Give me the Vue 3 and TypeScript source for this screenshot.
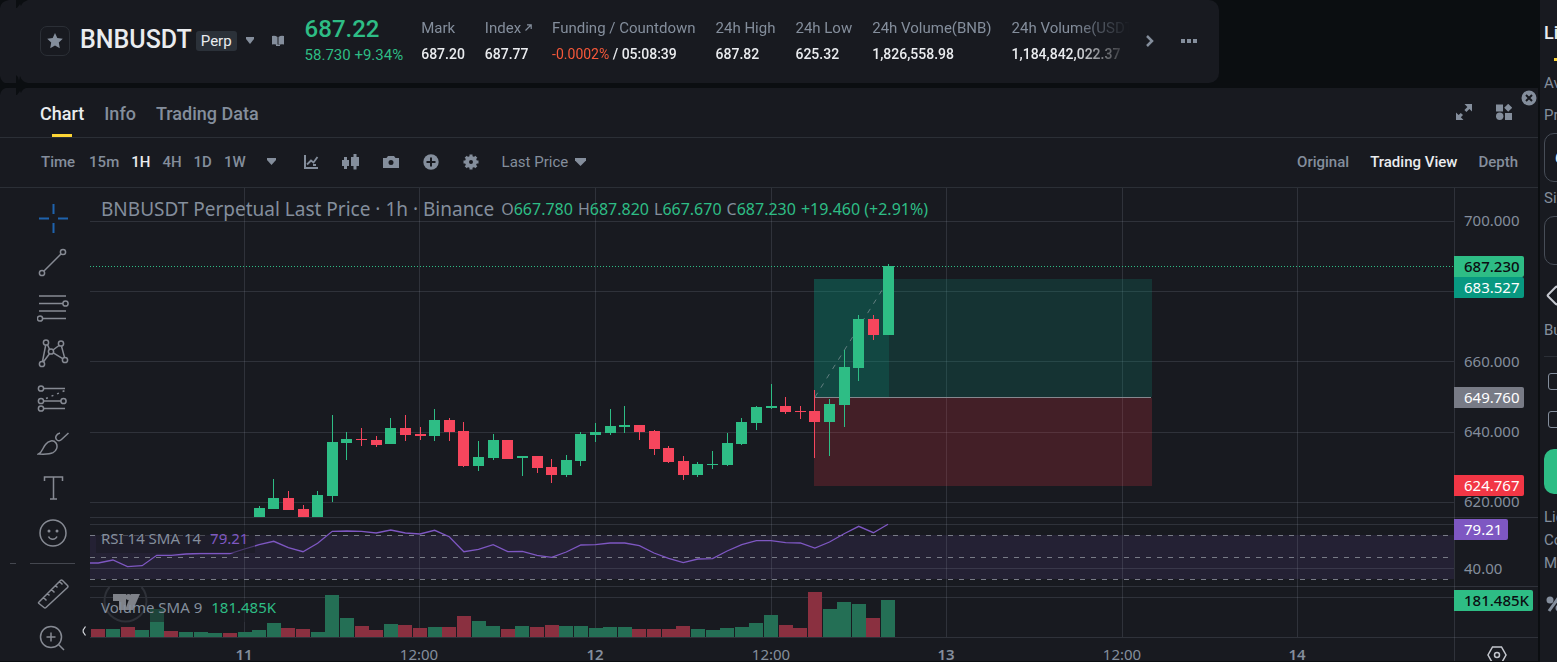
<script setup lang="ts">
import { ref } from 'vue'

type Tone = 'up' | 'down'
interface Stat { label: string; value: string; link?: boolean; rate?: string }
interface Tag { text: string; y: number; w: number; kind: string }

const stats: Stat[] = [
  { label: 'Mark', value: '687.20' },
  { label: 'Index', value: '687.77', link: true },
  { label: 'Funding / Countdown', value: ' / 05:08:39', rate: '-0.0002%' },
  { label: '24h High', value: '687.82' },
  { label: '24h Low', value: '625.32' },
  { label: '24h Volume(BNB)', value: '1,826,558.98' },
  { label: '24h Volume(USDT)', value: '1,184,842,022.37' },
]

const tabs = ['Chart', 'Info', 'Trading Data']
const activeTab = ref('Chart')
const intervals = ['15m', '1H', '4H', '1D', '1W']
const activeInterval = ref('1H')
const views = ['Original', 'Trading View', 'Depth']
const activeView = ref('Trading View')
const priceType = ref('Last Price')
const price = ref('687.2')
const size = ref('')
const leverage = ref(0)

const ohlc = [
  ['O', '667.780'],
  ['H', '687.820'],
  ['L', '667.670'],
  ['C', '687.230'],
]

/* Plot geometry: one bar per hour, day line of the 11th at x = 154. */
const DAY = 154
const STEP = 14.625
const FLOOR = 449
const barX = (i: number): number => DAY + 0.5 + STEP * i

/* bar index, tone, body top, body bottom, wick top, wick bottom */
const candles: [number, Tone, number, number, number, number][] = [
  [1, 'up', 320, 329, 318, 329], [2, 'up', 310, 321, 291, 321], [3, 'down', 310, 322, 303, 322],
  [4, 'down', 321, 329, 317, 329], [5, 'up', 307, 329, 303, 329], [6, 'up', 254, 308, 227, 314],
  [7, 'up', 251, 255, 244, 272], [8, 'down', 251, 252, 240, 258], [9, 'down', 252, 257, 248, 259],
  [10, 'up', 240, 256, 230, 256], [11, 'down', 240, 247, 227, 253], [12, 'down', 246, 248, 239, 252],
  [13, 'up', 232, 248, 221, 253], [14, 'down', 232, 244, 230, 253], [15, 'down', 243, 278, 234, 279],
  [16, 'up', 269, 278, 253, 283], [17, 'up', 252, 270, 246, 272], [18, 'down', 252, 271, 252, 271],
  [19, 'up', 268, 270, 268, 288], [20, 'down', 268, 280, 268, 285], [21, 'down', 279, 287, 271, 295],
  [22, 'up', 272, 287, 267, 289], [23, 'up', 246, 273, 244, 278], [24, 'up', 244, 247, 235, 254],
  [25, 'up', 238, 245, 221, 247], [26, 'up', 237, 239, 218, 245], [27, 'down', 237, 244, 237, 252],
  [28, 'down', 243, 261, 242, 267], [29, 'down', 260, 274, 258, 275], [30, 'down', 273, 287, 268, 292],
  [31, 'up', 276, 287, 274, 289], [32, 'up', 276, 277, 263, 281], [33, 'up', 255, 277, 245, 278],
  [34, 'up', 234, 256, 230, 257], [35, 'up', 219, 235, 218, 242], [36, 'up', 218, 220, 196, 221],
  [37, 'down', 218, 224, 209, 226], [38, 'down', 223, 224, 218, 231], [39, 'down', 223, 234, 202, 270],
  [40, 'up', 216, 234, 211, 268], [41, 'up', 179, 217, 162, 239], [42, 'up', 131, 180, 127, 193],
  [43, 'down', 131, 147, 127, 152], [44, 'up', 78, 147, 76, 147],
]

/* Volume bars from index -10: positive heights rise, negative heights are falling hours. */
const volumes = [
  -8, 8, -10, 7, 28, -6, 5, 5, 4, -4, 5, 7, 14, -9, -8, 5, 42, 19, -11, -7, 13, -12, -9, 10, -10,
  -21, 16, 11, -8, 11, -10, -12, 11, 11, 9, 10, 10, -8, -8, -8, -11, 8, 7, 9, 10, 14, 22, -12, -9,
  -45, 28, 35, 33, -19, 37,
]

const rsi = [
  375, 375, 372, 378.7, 377.7, 367.3, 367.3, 366, 365.5, 365.5, 365.5, 361, 356.7, 353.3, 359.7,
  363.7, 355.3, 343.3, 343, 343.3, 345, 342, 345, 346, 342.3, 348.7, 363.7, 361.3, 356.7, 363.7,
  363.3, 367.3, 369.3, 364, 357, 356.7, 355, 355, 357.7, 365, 370.3, 374.7, 371, 370.7, 363, 356.7,
  352.7, 352.7, 354.7, 355, 360, 354, 345.7, 338.3, 344.7, 336.3,
]
const rsiPoints = rsi.map((y, k) => `${k === 0 ? 0 : barX(k - 11)},${y}`).join(' ')

const gridX = [154, 329, 505, 681, 856, 1032, 1207]
const gridY = [33, 103, 173, 244, 314, 336, 380, 409]
const timeLabels = ['11', '12:00', '12', '12:00', '13', '12:00', '14']

const scale = [
  { text: '700.000', y: 33 }, { text: '660.000', y: 174 }, { text: '640.000', y: 244 },
  { text: '620.000', y: 314 }, { text: '80.00', y: 336 }, { text: '40.00', y: 381 },
]
const tags: Tag[] = [
  { text: '687.230', y: 68, w: 70, kind: 'last' },
  { text: '683.527', y: 89, w: 70, kind: 'target' },
  { text: '649.760', y: 199, w: 70, kind: 'entry' },
  { text: '624.767', y: 287, w: 70, kind: 'stop' },
  { text: '79.21', y: 331, w: 54, kind: 'rsi' },
  { text: '181.485K', y: 402, w: 79, kind: 'last' },
]

const tools: { name: string; body: string }[] = [
  { name: 'Crosshair', body: '<g stroke="#1e63ad" stroke-width="2"><path d="M16.500 2v10M16.500 21v10M2 16.500h10M21 16.500h10"/></g>' },
  { name: 'Trend line', body: '<circle cx="5" cy="26" r="2.6"/><circle cx="26" cy="5" r="2.6"/><path d="M7 24 24 7"/>' },
  { name: 'Fibonacci', body: '<path d="M2 4h27M2 11.500h24M2 19h27M6 26.500h23"/><circle cx="28.500" cy="11.500" r="2.600"/><circle cx="3" cy="26.500" r="2.600"/>' },
  { name: 'Patterns', body: '<g transform="translate(0 1)"><circle cx="9" cy="4.500" r="2.600"/><circle cx="24" cy="5.500" r="2.600"/><circle cx="14" cy="13.500" r="2.600"/><circle cx="5" cy="26" r="2.600"/><circle cx="28" cy="22" r="2.600"/><path d="M8.700 7.200 5.500 23.500M10.500 6.800l2 4.500M22 7.500l-6 4.500M24.500 8.200l3 11.200M16.300 14.800l9.400 5.800M12.500 15.700 6.500 23.800"/></g>' },
  { name: 'Forecast', body: '<circle cx="4" cy="6.500" r="2.600"/><circle cx="4" cy="19" r="2.600"/><circle cx="26.500" cy="19" r="2.600"/><circle cx="4" cy="26.500" r="2.600"/><path d="M6.600 6.500H28M6.600 19H24M6.600 26.500H28"/><path d="M9 16.500 28 8.500" stroke-dasharray="2 4"/>' },
  { name: 'Brush', body: '<path d="M1.500 27c4-2 4-6 7-9.500 3-4 8-5 10.500-1.500 2.500 4 0 8-3 9.700-3 1.500-9 1.600-14.500 1.300zM23 6c-4 1-5.500 5-3 7 1.500 1 3 1 4.500-.5L31.500 6"/>' },
  { name: 'Text', body: '<path d="M7.500 9V5h18V9M16.500 5v22M13 27h7"/>' },
  { name: 'Emoji', body: '<circle cx="16" cy="16" r="13"/><path d="M11.500 19.500c1.500 3.500 7 3.500 8.500 0"/><g fill="#868a93" stroke="none"><circle cx="12" cy="14" r="1.500"/><circle cx="20" cy="14" r="1.500"/></g>' },
]
const lowerTools: { name: string; body: string }[] = [
  { name: 'Measure', body: '<path d="M2 25 23.500 3.500q1-1 2 0l5 5q1 1 0 2L9 30.500q-1 1-2 0L2 26.500q-1-.8 0-1.500zM6.500 20.500l3 3M10.500 16.500l2 2M14.500 12.500l3 3M18.500 8.500l2 2M22.500 4.500l3 3"/>' },
  { name: 'Zoom in', body: '<circle cx="14" cy="15" r="10.500"/><path d="M21.500 22.500l5.500 5.500M14 10.500v9M9.500 15h9"/>' },
]
</script>

<template>
  <div class="page">
    <main class="main">
      <header class="ticker">
        <button class="star" aria-label="Favourite">
          <svg width="16" height="16" viewBox="0 0 16 16"><path fill="currentColor" d="M8 0l2.300 5 5.500.7-4 3.900 1 5.600L8 12.500l-4.800 2.700 1-5.600-4-3.900L5.700 5z" /></svg>
        </button>
        <h1 class="symbol">BNBUSDT</h1>
        <span class="perp">Perp</span>
        <button class="plain pair" aria-label="Choose pair">
          <svg width="8" height="7" viewBox="0 0 8 7"><path fill="currentColor" d="M0 0h8v2L4 7 0 2z" /></svg>
        </button>
        <button class="plain guide" aria-label="Guide">
          <svg width="12" height="11" viewBox="0 0 12 11"><path fill="currentColor" d="M0 1q3-1 5.500 1v8Q3 9 0 9.500zM12 1Q9 0 6.500 2v8q2.500-1 5.500-.5zM4 9.500h4v1.500H4z" /></svg>
        </button>
        <div class="quote">
          <div class="last">687.22</div>
          <div class="change">58.730 +9.34%</div>
        </div>
        <dl class="stats">
          <div v-for="s in stats" :key="s.label" class="stat">
            <dt>{{ s.label }}<svg v-if="s.link" class="ext" width="7" height="7" viewBox="0 0 7 7"><path d="M.5 6.500 6 1M2 .8h4.200V5" fill="none" stroke="currentColor" stroke-width="1.200" /></svg></dt>
            <dd><span v-if="s.rate" class="rate">{{ s.rate }}</span>{{ s.value }}</dd>
          </div>
        </dl>
        <button class="plain next" aria-label="Scroll">
          <svg width="10" height="14" viewBox="0 0 10 14"><path d="M2 2l5 5-5 5" fill="none" stroke="currentColor" stroke-width="2.500" /></svg>
        </button>
        <button class="plain more" aria-label="More">
          <svg width="16" height="4" viewBox="0 0 16 4"><path fill="currentColor" d="M0 0h4v4H0zM6 0h4v4H6zM12 0h4v4h-4z" /></svg>
        </button>
      </header>

      <section class="panel">
        <nav class="tabs">
          <button v-for="t in tabs" :key="t" class="tab" :class="{ on: t === activeTab }" @click="activeTab = t">{{ t }}</button>
          <span class="grow"></span>
          <button class="plain expand" aria-label="Expand">
            <svg width="16" height="16" viewBox="0 0 16 16"><path fill="currentColor" d="M8.500 0H16v7.500l-2.600-2.600-3 3-2-2 3-3zM7.500 16H0V8.500l2.600 2.600 2.200-2.200 2.200 2.200-2.200 2.200z" /></svg>
          </button>
          <button class="plain widgets" aria-label="Widgets">
            <svg width="16" height="16" viewBox="0 0 16 16"><path fill="currentColor" d="M0 .5h7v7H0zM12.200-.2l4 4-4 4-4-4zM9 9h7v7H9z" /><circle cx="3.700" cy="12.300" r="3.700" fill="currentColor" /></svg>
          </button>
          <button class="plain close" aria-label="Close">
            <svg width="16" height="16" viewBox="0 0 16 16"><circle cx="8" cy="8" r="7.500" fill="currentColor" /><path d="M5 5l6 6M11 5l-6 6" stroke="#181a20" stroke-width="2" /></svg>
          </button>
        </nav>

        <div class="bar">
          <span class="time">Time</span>
          <button v-for="i in intervals" :key="i" class="pick" :class="{ on: i === activeInterval }" @click="activeInterval = i">{{ i }}</button>
          <button class="plain frames" aria-label="More intervals">
            <svg width="9" height="7" viewBox="0 0 9 7"><path fill="currentColor" d="M0 0h9v2L4.500 7 0 2z" /></svg>
          </button>
          <div class="icons">
            <button class="plain" aria-label="Indicators"><svg width="16" height="16" viewBox="0 0 16 16"><path d="M2 1v13h13" fill="none" stroke="currentColor" stroke-width="2" /><path d="M4 10.500l4-4 2.500 2L14.500 3M10 11h3" fill="none" stroke="currentColor" stroke-width="1.800" /></svg></button>
            <button class="plain" aria-label="Chart style"><svg width="18" height="16" viewBox="0 0 18 16"><path fill="currentColor" d="M0 6h2V3h3v3h2v6H5v3H2v-3H0zM9 3h2.500V0h3v3H17v9h-2.500v3.500h-3V12H9z" /></svg></button>
            <button class="plain" aria-label="Snapshot"><svg width="16" height="14" viewBox="0 0 16 14"><path fill="currentColor" fill-rule="evenodd" d="M0 3h3.500L5 1h6l1.500 2H16v10H0zm8 2a2.500 2.500 0 100 5 2.500 2.500 0 000-5z" /></svg></button>
            <button class="plain" aria-label="Add"><svg width="16" height="16" viewBox="0 0 16 16"><circle cx="8" cy="8" r="7.700" fill="currentColor" /><path d="M8 3.500v9M3.500 8h9" stroke="#181a20" stroke-width="2" /></svg></button>
            <button class="plain" aria-label="Settings"><svg width="16" height="16" viewBox="0 0 16 16"><circle cx="8" cy="8" r="4" fill="none" stroke="currentColor" stroke-width="4" /><path d="M8 .5v3M8 12.500v3M.5 8h3M12.500 8h3M2.700 2.700l2 2M11.300 11.300l2 2M13.300 2.700l-2 2M4.700 11.300l-2 2" stroke="currentColor" stroke-width="3" /></svg></button>
          </div>
          <label class="source">
            <select v-model="priceType" aria-label="Price source"><option>Last Price</option></select>
            <svg width="11" height="8" viewBox="0 0 11 8"><path fill="currentColor" d="M0 0h11v2.500L5.500 8 0 2.500z" /></svg>
          </label>
          <span class="grow"></span>
          <div class="views">
            <button v-for="v in views" :key="v" class="pick" :class="{ on: v === activeView }" @click="activeView = v">{{ v }}</button>
          </div>
        </div>

        <div class="board">
          <div class="tools">
            <button v-for="t in tools" :key="t.name" class="plain tool" :aria-label="t.name">
              <svg width="32" height="32" viewBox="0 0 32 32" v-html="t.body"></svg>
            </button>
            <div class="divider"></div>
            <button v-for="t in lowerTools" :key="t.name" class="plain tool" :aria-label="t.name">
              <svg width="32" height="32" viewBox="0 0 32 32" v-html="t.body"></svg>
            </button>
            <button class="plain fold" aria-label="Collapse">
              <svg width="4" height="10" viewBox="0 0 4 10"><path d="M3.500.5 1.200 4v2l2.300 3.500" fill="none" stroke="#d5d8dd" stroke-width="1.200" /></svg>
            </button>
          </div>

          <div class="plot">
            <svg class="canvas" width="100%" height="473" shape-rendering="crispEdges">
              <rect x="0" y="347" width="100%" height="44" class="band" />
              <g class="grid">
                <rect v-for="x in gridX" :key="x" :x="x" y="0" width="1" :height="FLOOR" />
                <rect v-for="y in gridY" :key="y" x="0" :y="y" width="100%" height="1" />
                <rect x="0" y="329" width="100%" height="1" />
                <rect x="0" y="398" width="100%" height="1" />
                <rect x="0" :y="FLOOR" width="100%" height="1" />
              </g>
              <g class="bound">
                <line v-for="y in [347.5, 369.5, 391.5]" :key="y" x1="0" x2="100%" :y1="y" :y2="y" />
              </g>
              <rect
                v-for="(v, k) in volumes" :key="k"
                :x="Math.round(barX(k - 10) - 7)" :y="FLOOR - Math.abs(v)" width="14" :height="Math.abs(v)"
                :class="v > 0 ? 'vol-up' : 'vol-down'"
              />
              <rect x="724" y="91" width="338" height="118" class="gain" />
              <rect x="724" y="91" width="75" height="118" class="gain" />
              <rect x="724" y="210" width="338" height="88" class="loss" />
              <rect x="724" y="209" width="337" height="1" fill="#85888f" />
              <line x1="725" y1="209" x2="799" y2="91" class="path" shape-rendering="geometricPrecision" />
              <line x1="0" x2="100%" y1="78.5" y2="78.5" class="lastline" />
              <g v-for="c in candles" :key="c[0]" :class="c[1]">
                <rect :x="Math.floor(barX(c[0]))" :y="c[4]" width="1" :height="c[5] - c[4]" />
                <rect :x="Math.floor(barX(c[0])) - 5" :y="c[2]" width="11" :height="c[3] - c[2]" />
              </g>
              <polyline :points="rsiPoints" class="rsi" shape-rendering="geometricPrecision" />
              <g class="shade">
                <rect x="6" y="337" width="159" height="28" />
                <rect x="6" y="410" width="189" height="24" />
              </g>
              <g class="mark" shape-rendering="geometricPrecision">
                <path d="M19.500 399a21 21 0 1 0 32 0" fill="none" stroke="#2e3138" stroke-width="2" />
                <path fill="#7f8289" d="M23 406h13v16h-7v-9h-6zM41 406h9l-7 16h-8z" />
                <circle cx="38.500" cy="409" r="3" fill="#7f8289" />
              </g>
              <text
                v-for="(t, k) in timeLabels" :key="k" :x="gridX[k]" y="472" text-anchor="middle"
                class="label" :class="{ day: !t.includes(':') }"
              >{{ t }}</text>
            </svg>
            <div class="legend title">
              <h2>BNBUSDT Perpetual Last Price · 1h · Binance</h2>
              <p>
                <span v-for="o in ohlc" :key="o[0]">{{ o[0] }}<b>{{ o[1] }}</b></span>
                <span><b>+19.460 (+2.91%)</b></span>
              </p>
            </div>
            <div class="legend rsi-legend">RSI 14 SMA 14<span class="violet">79.21</span></div>
            <div class="legend vol-legend">Volume SMA 9<span class="green">181.485K</span></div>
          </div>

          <svg class="axis" height="473" width="84">
            <g class="grid">
              <rect x="0" y="0" width="1" height="473" />
              <rect x="0" y="329" width="84" height="1" />
              <rect x="0" y="398" width="84" height="1" />
              <rect x="0" :y="FLOOR" width="84" height="1" />
            </g>
            <text v-for="s in scale" :key="s.text" x="10" :y="s.y + 5" class="label">{{ s.text }}</text>
            <g v-for="t in tags" :key="t.text" :class="['tag', t.kind]">
              <path :d="`M0 ${t.y}h${t.w - 2}q2 0 2 2v17q0 2-2 2H0z`" />
              <text x="10" :y="t.y + 16">{{ t.text }}</text>
            </g>
            <path d="M38.500 459h9l4.500 8-4.500 8h-9l-4.500-8z" class="hex" />
            <circle cx="43" cy="467" r="2.500" class="hex" />
          </svg>
        </div>
      </section>
    </main>

    <aside class="order">
      <form class="form" @submit.prevent>
        <button type="button" class="kind">Limit</button>
        <div class="underline"></div>
        <p class="row first">Avbl</p>
        <label class="row" for="price">Price</label>
        <input id="price" v-model="price" type="text" class="field" />
        <label class="row tight" for="size">Size</label>
        <input id="size" v-model="size" type="text" class="field" />
        <input v-model="leverage" type="range" class="slider" aria-label="Amount" />
        <p class="row buy">Buy</p>
        <hr />
        <input type="checkbox" class="check" aria-label="TP/SL" />
        <input type="checkbox" class="check second" aria-label="Reduce only" />
        <button class="submit" aria-label="Buy"></button>
        <p class="row liq">Liq</p>
        <p class="row near">Cost</p>
        <p class="row near">Max</p>
        <svg class="percent" width="20" height="18" viewBox="0 0 20 18"><circle cx="4" cy="5" r="3.500" fill="#848e9c" /><circle cx="13" cy="13" r="3.500" fill="#848e9c" /><path d="M13 2 3 16" stroke="#848e9c" stroke-width="3" /></svg>
      </form>
    </aside>

    <svg class="corners" width="30" height="98" viewBox="0 0 30 98">
      <path d="M0 0h9Q1 1 0 8zM16 0h12q-6 2-7 6l-1-2-3 4h-1zM0 76q1 7 9 8v3q-8 1-9 8zM16 75l2 2 1 4 1-5q2 6 8 7v4q-6 2-7 6l-1-2-3 4h-1z" />
    </svg>
  </div>
</template>

<style>
html,
body {
  background: #0b0e11;
}
body {
  margin: 0;
}
</style>

<style scoped>
.page {
  position: relative;
  display: flex;
  gap: 2px;
  min-height: 100vh;
  overflow: hidden;
  background: #0b0e11;
  color: #848e9c;
  font-family: Roboto, 'Liberation Sans', sans-serif;
  font-size: 15px;
  line-height: 20px;
}
.page * {
  box-sizing: border-box;
}
h1,
h2,
p,
dl,
dd {
  margin: 0;
}
button,
select,
input {
  margin: 0;
  padding: 0;
  border: 0;
  background: none;
  color: inherit;
  font: inherit;
}
button {
  cursor: pointer;
}
svg {
  display: block;
  flex: none;
}
.grow {
  flex: 1;
}
.plain {
  display: flex;
  flex: none;
  align-items: center;
  justify-content: center;
}
.main {
  display: flex;
  flex: 1;
  flex-direction: column;
  gap: 5px;
  min-width: 0;
}
.corners {
  position: absolute;
  top: 0;
  left: 0;
  fill: #0b0e11;
}

/* ticker */
.ticker {
  display: flex;
  align-items: center;
  height: 83px;
  max-width: 1219px;
  padding: 0 22px 2px 40px;
  border-radius: 0 10px 10px 0;
  background: #181a20;
}
.star {
  display: flex;
  flex: none;
  align-items: center;
  justify-content: center;
  width: 30px;
  height: 30px;
  border: 1px solid #2b2f36;
  border-radius: 7px;
}
.symbol {
  margin-left: 10px;
  padding-bottom: 2px;
  color: #eaecef;
  font-size: 25px;
  font-weight: 500;
  line-height: 30px;
}
.perp {
  margin-left: 4px;
  padding: 0 5px;
  border-radius: 3px;
  background: #2b3139;
  color: #eaecef;
}
.pair {
  margin-left: 9px;
}
.guide {
  margin-left: 18px;
}
.quote {
  flex: none;
  margin-left: 21px;
  color: #2ebd85;
}
.last {
  font-size: 24px;
  font-weight: 500;
  line-height: 28px;
}
.change {
  line-height: 24px;
}
.stats {
  display: flex;
  flex: 1;
  gap: 20px;
  min-width: 0;
  margin-left: 18px;
  overflow: hidden;
  white-space: nowrap;
  mask-image: linear-gradient(to right, #000 calc(100% - 56px), transparent);
}
.stat {
  flex: none;
}
.stat dt {
  display: flex;
  gap: 4px;
  align-items: center;
  line-height: 26px;
}
.stat dd {
  color: #eaecef;
  font-size: 14px;
  font-weight: 500;
  line-height: 26px;
  white-space: pre;
}
.rate {
  color: #f6583a;
  font-weight: 400;
}
.next {
  margin-left: 15px;
}
.more {
  margin-left: 26px;
}

/* chart panel */
.panel {
  display: flex;
  flex: 1;
  flex-direction: column;
  margin-bottom: 1px;
  background: #181a20;
}
.tabs {
  position: relative;
  display: flex;
  gap: 20px;
  height: 50px;
  padding: 0 26px 0 40px;
  border-bottom: 1px solid #2b2f36;
}
.tab {
  position: relative;
  padding-top: 2px;
  font-size: 18px;
  font-weight: 500;
}
.tab.on {
  color: #eaecef;
}
.tab.on::after {
  position: absolute;
  bottom: 0;
  left: 50%;
  width: 20px;
  height: 3px;
  margin-left: -10px;
  background: #fcd535;
  content: '';
}
.expand,
.widgets {
  padding-bottom: 2px;
}
.widgets {
  margin-left: 4px;
}
.close {
  position: absolute;
  top: 2px;
  right: 1px;
}
.bar {
  display: flex;
  align-items: center;
  height: 50px;
  padding: 0 20px 2px 41px;
  border-bottom: 1px solid #2b2f36;
  font-weight: 500;
}
.time {
  margin-right: 2px;
}
.pick {
  margin-left: 12px;
  font-weight: 500;
}
.pick.on {
  color: #eaecef;
}
.frames {
  margin-left: 21px;
}
.icons {
  display: flex;
  margin-left: 15px;
}
.icons .plain {
  width: 40px;
  height: 30px;
}
.source {
  display: flex;
  gap: 6px;
  align-items: center;
  margin-left: 11px;
  font-weight: 400;
}
.source select {
  appearance: none;
}
.views {
  display: flex;
  gap: 21px;
}
.views .pick {
  margin: 0;
}

/* drawing tools */
.board {
  display: flex;
  flex: 1;
}
.tools {
  position: relative;
  width: 90px;
  padding: 7px 15px 0 30px;
}
.tool {
  width: 45px;
  height: 45px;
}
.tool svg {
  fill: none;
  stroke: #868a93;
  stroke-width: 1.5;
}
.divider {
  height: 1px;
  margin: 8px 0 6px;
  background: #44474f;
}
.divider::before {
  position: absolute;
  left: 10px;
  width: 6px;
  height: 1px;
  background: #44474f;
  content: '';
}
.fold {
  position: absolute;
  bottom: 25px;
  left: 82px;
}

/* plot */
.plot {
  position: relative;
  flex: 1;
  min-width: 0;
  overflow: hidden;
}
.grid {
  fill: #9aa0b0;
  fill-opacity: 0.18;
}
.band {
  fill: #7e57c2;
  fill-opacity: 0.12;
}
.bound {
  stroke: #787b86;
  stroke-dasharray: 5 6;
}
.lastline {
  stroke: #2ebd85;
  stroke-dasharray: 1 2;
}
.up {
  fill: #2ebd85;
}
.down {
  fill: #f6465d;
}
.vol-up {
  fill: #246f55;
}
.vol-down {
  fill: #8a3040;
}
.gain {
  fill: #089981;
  fill-opacity: 0.2;
}
.loss {
  fill: #f23645;
  fill-opacity: 0.2;
}
.path {
  stroke: #b2b5be;
  stroke-opacity: 0.5;
  stroke-dasharray: 5 6;
}
.canvas .rsi {
  fill: none;
  stroke: #7e57c2;
  stroke-width: 1.3;
}
.shade {
  fill: #181a20;
  fill-opacity: 0.5;
}
.label {
  fill: #848e9c;
  font-family: 'Noto Sans', sans-serif;
  font-size: 15px;
}
.day {
  font-weight: 600;
}
.legend {
  position: absolute;
  left: 6px;
  padding: 0 5px;
  font-family: 'Noto Sans', sans-serif;
  line-height: 24px;
  white-space: nowrap;
}
.title {
  top: 9px;
  display: flex;
  gap: 7px;
}
.title h2 {
  font-size: 19px;
  font-weight: 400;
}
.title p {
  display: flex;
  gap: 5px;
  font-size: 16px;
}
.title b {
  color: #2ebd85;
  font-weight: 400;
}
.rsi-legend {
  top: 338px;
}
.vol-legend {
  top: 407px;
}
.rsi-legend span,
.vol-legend span {
  margin-left: 9px;
}
.violet {
  color: #7e57c2;
}
.green {
  color: #2ebd85;
}

/* price axis */
.tag text {
  fill: #fff;
  font-family: 'Noto Sans', sans-serif;
  font-size: 15px;
}
.tag.last path {
  fill: #2ebd85;
}
.tag.last text {
  fill: #0b0e11;
}
.target path {
  fill: #089981;
}
.entry path {
  fill: #787b86;
}
.stop path {
  fill: #f23645;
}
.tag.rsi path {
  fill: #7e57c2;
}
.hex {
  fill: none;
  stroke: #c4c7ce;
  stroke-width: 1.5;
}

/* order form, cut off by the window edge */
.order {
  width: 17px;
  flex: none;
  overflow: hidden;
  background: #181a20;
}
.form {
  display: flex;
  flex-direction: column;
  align-items: flex-start;
  width: 300px;
  padding: 21px 0 0 4px;
}
.kind {
  color: #eaecef;
  font-size: 18px;
  font-weight: 500;
  line-height: 24px;
}
.underline {
  width: 20px;
  height: 3px;
  margin: 13px 0 0 10px;
  background: #fcd535;
}
.row {
  margin-top: 12px;
}
.row.tight {
  margin-top: 6px;
}
.row.near {
  margin-top: 3px;
}
.row.buy {
  margin-top: 15px;
}
.field {
  width: 280px;
  height: 49px;
  margin-top: 8px;
  padding: 0 10px;
  border: 1px solid #474d57;
  border-radius: 10px;
  color: #eaecef;
  font-weight: 500;
}
.slider {
  appearance: none;
  width: 280px;
  height: 20px;
  margin-top: 20px;
}
.slider::-webkit-slider-thumb {
  width: 15px;
  height: 15px;
  margin-left: 5px;
  border: 2px solid #c4c7ce;
  border-radius: 2px;
  background: #181a20;
  appearance: none;
  transform: rotate(45deg);
}
hr {
  width: 280px;
  height: 1px;
  margin: 16px 0 0;
  border: 0;
  background: #2b2f36;
}
.check {
  width: 17px;
  height: 17px;
  margin: 16px 0 0 4px;
  border: 1px solid #848e9c;
  border-radius: 3px;
  appearance: none;
}
.check.second {
  margin-top: 21px;
}
.submit {
  width: 280px;
  height: 45px;
  margin-top: 21px;
  border-radius: 10px;
  background: #2ebd85;
}
.row.liq {
  margin-top: 13px;
}
.percent {
  margin: 22px 0 0 2px;
}
</style>
